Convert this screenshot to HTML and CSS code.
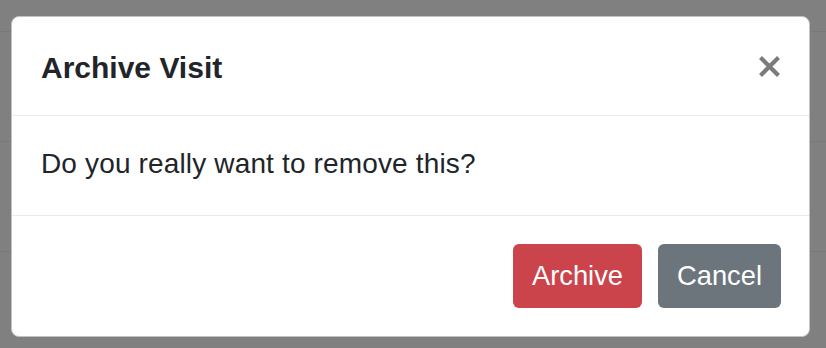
FILE: index.html
```html
<!DOCTYPE html>
<html lang="en">
<head>
<meta charset="utf-8">
<title>Archive Visit</title>
<link rel="stylesheet" href="styles.css">
</head>
<body>
<div class="modal">
  <div class="modal-header">
    <h5 class="modal-title">Archive Visit</h5>
    <button class="close" type="button" aria-label="Close">
      <svg class="close-icon" width="21" height="21" viewBox="0 0 21 21" aria-hidden="true">
        <path d="M1.5 1.5 L19.5 19.5 M19.5 1.5 L1.5 19.5" stroke="#7b7b7b" stroke-width="4.2" fill="none"/>
      </svg>
    </button>
  </div>
  <div class="modal-body">Do you really want to remove this?</div>
  <div class="modal-footer">
    <button class="btn btn-danger" type="button">Archive</button>
    <button class="btn btn-secondary" type="button">Cancel</button>
  </div>
</div>
</body>
</html>
```
FILE: styles.css
```css
* { box-sizing: border-box; }
html, body { margin: 0; padding: 0; }
body {
  width: 826px;
  height: 348px;
  overflow: hidden;
  font-family: "Liberation Sans", Arial, sans-serif;
  color: #212529;
  background: repeating-linear-gradient(to bottom, #808080 0 31px, #737a80 31px 32px, #808080 32px 110px);
  padding: 16px 0 0 11px;
}
.modal {
  width: 799px;
  height: 321px;
  background: #fff;
  border: 1px solid #c2c2c2;
  border-radius: 8px;
  display: flex;
  flex-direction: column;
}
.modal-header {
  display: flex;
  align-items: center;
  justify-content: space-between;
  padding: 28px 29px 25px 29px;
  border-bottom: 1px solid #e9e9ee;
  height: 99px;
}
.modal-title {
  margin: 0;
  font-size: 30px;
  font-weight: 700;
  line-height: 45px;
  color: #212529;
}
.close {
  border: 0;
  background: transparent;
  padding: 0;
  margin: -3px 0 0 0;
  width: 21px;
  height: 21px;
  display: flex;
}
.close-icon { display: block; }
.modal-body {
  padding: 28px 29px 31px 29px;
  font-size: 28px;
  letter-spacing: 0.15px;
  line-height: 40px;
  height: 99px;
}
.modal-footer {
  flex: 1;
  border-top: 1px solid #e9e9ee;
  display: flex;
  justify-content: flex-end;
  align-items: center;
  gap: 16px;
  padding: 0 28px 1px 0;
}
.btn {
  border: 0;
  height: 64px;
  padding: 0 19px;
  border-radius: 6px;
  font-family: "Liberation Sans", Arial, sans-serif;
  font-size: 27.3px;
  line-height: 64px;
  color: #fff;
}
.btn-danger { background: #cc444b; }
.btn-secondary { background: #6c747c; }
```
